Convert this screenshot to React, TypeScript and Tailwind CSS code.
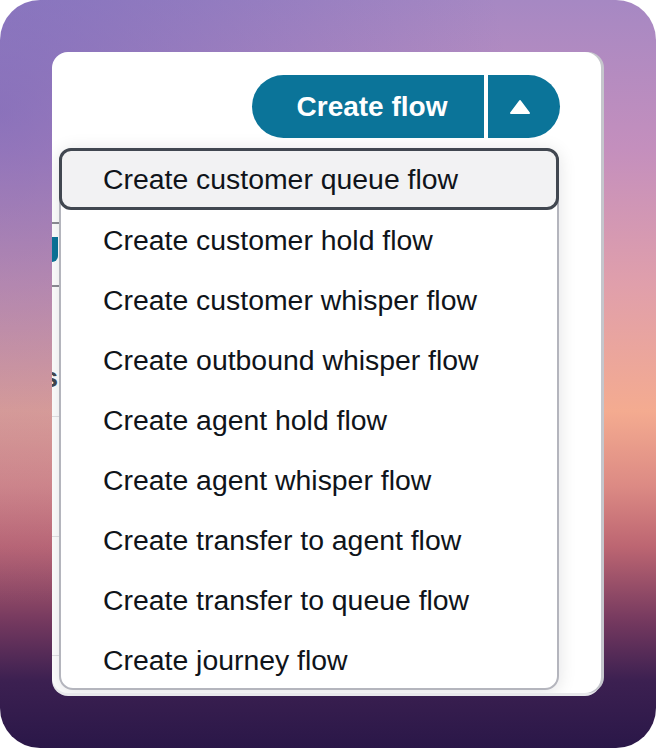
import React from "react";

const items = [
  "Create customer queue flow",
  "Create customer hold flow",
  "Create customer whisper flow",
  "Create outbound whisper flow",
  "Create agent hold flow",
  "Create agent whisper flow",
  "Create transfer to agent flow",
  "Create transfer to queue flow",
  "Create journey flow",
];

const App: React.FC = () => {
  return (
    <div className="w-[656px] h-[748px] bg-white">
      <div className="w-[656px] h-[748px] rounded-[40px] overflow-hidden pt-[52px] pl-[52px] bg-[radial-gradient(ellipse_at_0%_15%,rgba(98,92,184,0.55),rgba(98,92,184,0)_55%),linear-gradient(to_bottom,#a688c3_0%,#c48fbd_20%,#e09fab_38%,#f4ab90_55%,#dc8a84_65%,#bd6672_73%,#75395f_83%,#3c2051_91%,#2a1748_100%)]">
        <div
          className="relative w-[549px] h-[641px] bg-white rounded-[16px] overflow-hidden shadow-[3px_0_0_0_#c5c6cc,0_3px_0_0_#e8e8eb]"
          style={{ fontFamily: '"Liberation Sans", Arial, sans-serif' }}
        >
          <div className="flex justify-end pt-[23px] pr-[41px]">
            <div className="flex h-[63px] gap-[4px]">
              <button className="w-[232px] h-full pl-[8px] rounded-l-full bg-[#0b7499] text-white text-[28px] font-bold">
                Create flow
              </button>
              <button className="w-[72px] h-full pr-[8px] rounded-r-full bg-[#0b7499] flex items-center justify-center">
                <svg width="22" height="16" viewBox="0 0 22 16">
                  <polygon
                    points="11,2 20,14 2,14"
                    fill="#fff"
                    stroke="#fff"
                    strokeWidth="2"
                    strokeLinejoin="round"
                  />
                </svg>
              </button>
            </div>
          </div>

          {/* table behind the open menu, only a sliver shows on the left */}
          <div className="mt-[84px] w-[40px] flex flex-col">
            <div className="h-[2px] bg-[#8d8d95]" />
            <div className="mt-[13px] h-[25px] w-[6px] bg-[#0b7499] rounded-br-[8px]" />
            <div className="mt-[23px] h-[2px] bg-[#8d8d95]" />
            <div className="mt-[77px] w-[6px] h-[28px] flex justify-end whitespace-nowrap text-[28px] leading-[28px] font-bold text-[#414750]">
              s
            </div>
            <div className="mt-[24px] h-px bg-[#e2e2e5]" />
            <div className="mt-[119px] h-px bg-[#e2e2e5]" />
            <div className="mt-[118px] h-px bg-[#e2e2e5]" />
          </div>

          <div className="absolute left-[7px] top-[96px] w-[500px] h-[542px] bg-white border-2 border-[#b4b5bd] rounded-[14px] shadow-[0_2px_18px_rgba(0,7,22,0.12)]">
            <ul className="flex flex-col">
              {items.map((label, i) =>
                i === 0 ? (
                  <li
                    key={label}
                    className="-mx-[2px] -mt-[2px] h-[62px] flex items-center pl-[41px] bg-[#f2f2f3] border-[3px] border-[#414750] rounded-[12px] text-[28.4px] text-[#0f141a]"
                  >
                    {label}
                  </li>
                ) : (
                  <li
                    key={label}
                    className="h-[60px] flex items-center pl-[42px] text-[28.4px] text-[#0f141a]"
                  >
                    {label}
                  </li>
                )
              )}
            </ul>
          </div>
        </div>
      </div>
    </div>
  );
};

export default App;
